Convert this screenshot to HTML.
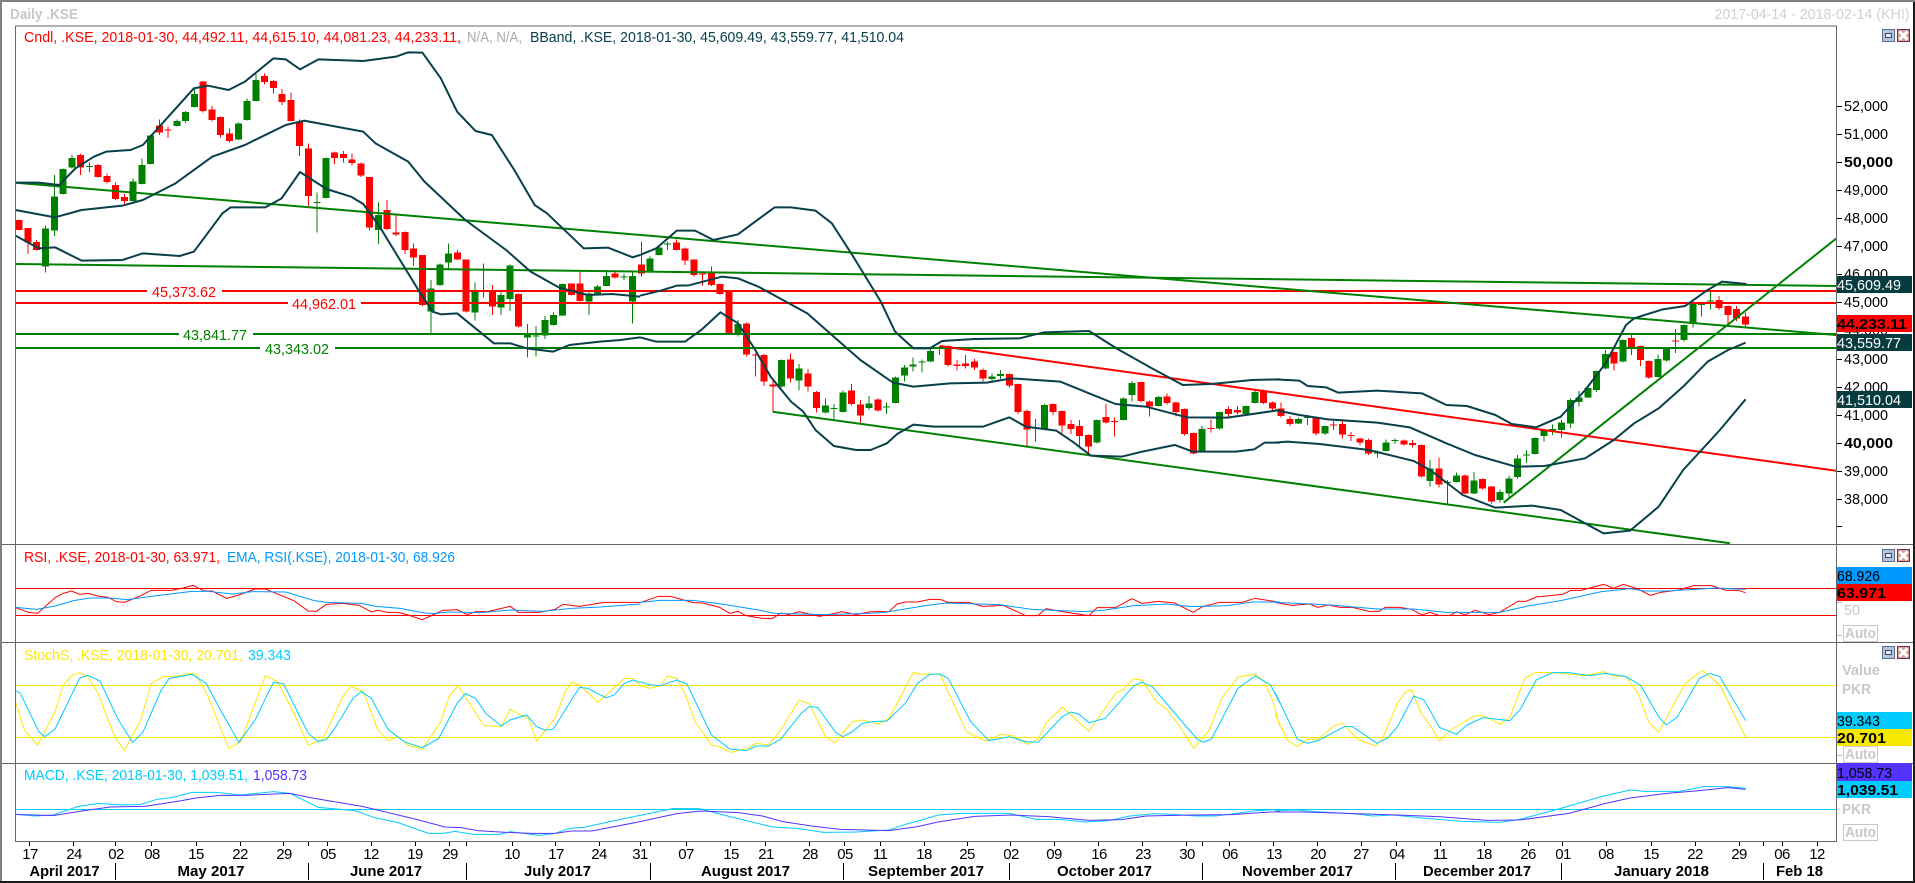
<!DOCTYPE html>
<html><head><meta charset="utf-8"><title>Daily .KSE</title>
<style>
html,body{margin:0;padding:0;background:#fff;width:1915px;height:883px;overflow:hidden}
svg{display:block}
text{font-family:"Liberation Sans",sans-serif;font-size:15px}
.n{vector-effect:non-scaling-stroke;fill:none}
.c{shape-rendering:crispEdges}
.bb{stroke:#07404a;stroke-width:2;stroke-linejoin:round}
.t1{stroke-width:1}
.b{font-weight:bold}
.g{fill:#c8c8c8;font-weight:bold}
.ax{fill:#000}
.d{fill:#000;text-anchor:middle}
.d text{letter-spacing:-.6px}
</style></head><body>
<svg width="1915" height="883" viewBox="0 0 1915 883" xmlns="http://www.w3.org/2000/svg">
<rect width="1915" height="883" fill="#fff"/>

<!-- candles group A -->
<g transform="translate(19.2,0) scale(8.763,0.33333)">
<path class="n c" stroke="#f00" stroke-width="1" d="M0 658V692M1 684V762M2 720V752M7 460V525M9 492V533M10 520V550M11 547V600M12 582V614M16 358V405M17 380V414M21 243V338M22 318V365M23 350V413M24 385V428M28 220V254M29 240V280M30 267V315M31 277V365M32 358V468M33 430V618M36 455V492M37 453V488M38 460V497M39 488V531M40 531V692M42 600V690M43 645V708M44 694V762M45 730V798M46 765V918M50 750V780M51 778V937M54 855V945M57 880V982M63 850V887M64 815V905M68 815V835M71 725V830M75 718V752M76 742V795M77 778V830M78 815V857M79 800V858M80 850V885"/>
<path class="n c" stroke="#f00" stroke-width="7" d="M0 660V690M1 684V728M2 726V750M7 465V502M9 495V531M10 528V546M11 555V597M12 591V603M16 376V398M17 389V392M21 245V333M22 328V360M23 351V405M24 400V423M28 228V246M29 243V264M30 282V306M31 300V363M32 364V438M33 445V588M36 458V474M37 462V474M38 478V489M39 490V526M40 531V682M42 630V687M43 698V703M44 696V750M45 745V773M46 765V915M50 757V778M51 778V935M54 875V920M57 882V980M63 850V885M64 850V903M68 820V832M71 793V820M75 727V750M76 745V782M77 778V825M78 821V824M79 818V855M80 852V882"/>
<path class="n c" stroke="#008000" stroke-width="1" d="M3 676V818M4 525V708M5 505V583M6 465V505M8 488V516M13 535V605M14 475V553M15 404V493M18 358V380M19 333V369M20 262V322M25 368V420M26 295V361M27 222V304M34 577V698M35 473V595M41 608V732M47 840V1000M48 790V858M49 730V812M52 848V962M53 790V893M55 870V945M56 793V933M58 972V1073M59 978V1070M60 948V1017M61 937V977M62 850V948M65 870V945M66 855V885M67 815V860M69 820V840M70 815V970M72 770V817M73 740V766M74 725V750"/>
<path class="n c" stroke="#008000" stroke-width="7" d="M3 685V800M4 589V692M5 507V582M6 474V502M8 498V501M13 544V603M14 495V552M15 406V492M18 363V378M19 336V363M20 282V321M25 370V418M26 303V360M27 240V303M34 606V609M35 474V594M41 645V690M47 865V935M48 793V855M49 760V788M52 875V938M55 885V923M56 797V897M58 1000V1013M59 1007V1010M60 960V1007M61 945V975M62 852V947M65 880V905M66 860V880M67 828V858M69 829V832M70 828V905M72 775V815M73 742V765M74 731V734"/>
</g>
<!-- candles group B -->
<g transform="translate(19.2,280) scale(8.763,0.33333)">
<path class="n c" stroke="#f00" stroke-width="1" d="M81 30V165M83 127V230M84 220V290M85 222V318M86 295V395M88 220V308M90 267V335M91 333V398M95 312V377M96 360V430M98 355V395M106 196V260M107 240V272M108 225V265M109 237V270M110 265V305M113 280V322M114 311V402M115 388V498M116 417V485M118 371V405M119 392V460M120 420V462M121 420V505M122 464V522M124 372V430M125 412V470M128 304V367M129 362V410M131 340V374M132 365V410M133 386V467M134 458V524M136 418V458M138 380V413M139 378V403M142 328V372M143 365V392M144 368V412M145 408V438M148 411V467M150 423V450M151 425V476M152 456V483M153 474V495M154 475V525M158 478V496M159 480V502M160 494V592M162 533V622M165 584V642M167 595V628M168 618V670M182 214V272M184 165V225M185 196V258M186 241V297M189 147V219M194 48V90M195 76V133M196 78V123M197 97V143"/>
<path class="n c" stroke="#f00" stroke-width="7" d="M81 30V160M83 130V223M84 224V227M85 225V305M86 313V320M88 238V296M90 280V320M91 336V384M95 331V372M96 373V406M98 358V392M106 198V255M107 253V258M108 250V258M109 245V263M110 270V296M113 282V317M114 312V396M115 393V449M116 442V445M118 372V396M119 393V437M120 432V447M121 438V468M122 465V500M124 411V427M125 423V426M128 306V363M129 364V380M131 349V369M132 367V396M133 387V462M134 459V520M136 444V447M138 387V402M139 390V398M142 331V369M143 367V385M144 385V408M145 417V432M148 413V461M150 433V436M151 432V464M152 465V468M153 475V487M154 480V520M158 481V493M159 489V495M160 495V590M162 565V613M165 586V640M167 597V625M168 620V664M182 216V251M184 174V202M185 198V240M186 243V292M189 182V185M194 60V84M195 78V105M196 87V115M197 109V133"/>
<path class="n c" stroke="#008000" stroke-width="1" d="M82 120V170M87 238V322M89 252V332M92 355V400M93 372V418M94 331V398M97 348V390M99 367V402M100 289V371M101 255V305M102 232V275M103 238V278M104 205V246M105 198V225M111 280V305M112 270V297M117 372V449M123 418V490M126 352V421M127 303V365M130 348V379M135 438V517M137 394V449M140 376V403M141 333V371M146 412V432M147 405V435M149 436V465M155 512V532M156 478V515M157 475V492M161 540V620M163 600V672M164 578V608M166 576V642M169 628V668M170 587V655M171 525V597M172 510V549M173 472V523M174 445V485M175 433V465M176 420V472M177 355V444M178 333V380M179 320V354M180 271V336M181 210V268M183 178V247M187 224V293M188 201V245M190 133V185M191 65V142M192 70V110M193 30V88"/>
<path class="n c" stroke="#008000" stroke-width="7" d="M82 132V160M87 240V320M89 265V302M92 376V398M93 384V387M94 337V396M97 370V384M99 379V382M100 292V369M101 262V287M102 253V260M103 244V247M104 213V245M105 204V207M111 289V297M112 282V288M117 375V447M123 420V488M126 355V420M127 309V345M130 351V378M135 447V515M137 396V446M140 378V402M141 336V369M146 417V430M147 411V414M149 438V460M155 514V521M156 487V513M157 480V483M161 565V603M163 606V609M164 586V606M166 601V640M169 636V660M170 595V640M171 535V591M172 524V527M173 474V522M174 450V468M175 447V452M176 428V450M177 360V431M178 353V366M179 324V353M180 273V330M181 222V266M183 180V245M187 237V291M188 203V241M190 135V180M191 72V132M192 72V75M193 61V64"/>
</g>

<!-- horizontal level lines -->
<g class="c">
<rect x="16" y="290" width="1820" height="2" fill="#f00"/>
<rect x="16" y="302" width="1820" height="2" fill="#f00"/>
<rect x="16" y="333" width="1820" height="2" fill="#008000"/>
<rect x="16" y="347" width="1820" height="2" fill="#008000"/>
<rect x="147" y="285" width="75" height="12" fill="#fff"/>
<rect x="288" y="297" width="73" height="12" fill="#fff"/>
<rect x="179" y="328" width="74" height="12" fill="#fff"/>
<rect x="260" y="342" width="75" height="12" fill="#fff"/>
</g>
<text x="152" y="297" fill="#f00" textLength="64" lengthAdjust="spacingAndGlyphs">45,373.62</text>
<text x="292" y="309" fill="#f00" textLength="64" lengthAdjust="spacingAndGlyphs">44,962.01</text>
<text x="183" y="340" fill="#008000" textLength="64" lengthAdjust="spacingAndGlyphs">43,841.77</text>
<text x="265" y="354" fill="#008000" textLength="64" lengthAdjust="spacingAndGlyphs">43,343.02</text>

<!-- diagonal trend lines -->
<g fill="none" stroke-width="2">
<path stroke="#008000" d="M16 182.7L1836 335"/>
<path stroke="#008000" d="M16 264L1836 286"/>
<path stroke="#008000" d="M1503.6 502.7L1836 238.7"/>
<path stroke="#008000" d="M772.6 411.7L1730 543.3"/>
<path stroke="#f00" d="M940 346L1836 470.7"/>
</g>

<!-- Bollinger bands -->
<g transform="scale(0.40816,0.33333)">
<path class="n bb" d="M38 548L95 548L145 555L185 505L230 470L260 455L320 450L350 435L475 265L510 257L560 270L600 245L670 175L700 178L735 208L780 178L890 183L970 170L1000 157L1035 158L1080 235L1120 335L1165 393L1205 405L1260 510L1310 615L1340 640L1430 745L1490 743L1550 772L1568 765"/>
<path class="n bb" d="M38 630L135 652L200 630L300 617L350 600L430 550L520 470L600 435L700 375L745 362L890 395L920 430L1000 485L1040 545L1140 660L1240 750L1300 815L1370 863L1440 885L1500 882L1568 890"/>
<path class="n bb" d="M38 707L95 745L135 742L200 782L300 780L350 760L440 768L475 755L545 640L565 622L650 622L690 595L735 516L800 567L860 590L890 612L930 680L990 800L1030 880L1060 935L1080 943L1120 940L1160 980L1210 1030L1250 1030L1290 1045L1355 1055L1395 1035L1470 1025L1520 1020L1568 1012"/>
</g>
<g transform="translate(640,0) scale(0.40816,0.33333)">
<path class="n bb" d="M0 765L40 745L90 692L135 692L180 720L240 703L330 622L370 622L430 632L470 670L520 765L575 875L590 905L625 995L670 1045L710 1045L740 1023L820 1017L930 1015L990 997L1100 993L1170 1047L1250 1102L1330 1155L1400 1152L1500 1140L1568 1138"/>
<path class="n bb" d="M0 887L50 872L90 857L120 856L200 830L240 835L290 860L350 900L410 940L470 1005L540 1080L620 1148L670 1160L760 1150L850 1148L910 1135L1030 1145L1100 1180L1165 1212L1240 1220L1340 1252L1440 1253L1568 1230"/>
<path class="n bb" d="M0 1012L40 1025L110 1025L150 990L197 937L240 970L280 1045L320 1130L370 1205L400 1235L430 1290L475 1338L530 1350L565 1350L605 1330L630 1302L670 1274L720 1280L840 1280L905 1252L945 1280L1020 1292L1060 1325L1105 1367L1180 1370L1230 1355L1310 1335L1355 1355L1460 1355L1505 1348L1530 1328L1568 1328"/>
</g>
<g transform="translate(1275,0) scale(0.40816,0.33333)">
<path class="n bb" d="M0 1138L60 1142L80 1158L125 1162L155 1178L250 1172L360 1180L420 1215L470 1218L540 1245L580 1272L640 1282L700 1250L760 1170L810 1090L860 975L880 955L950 928L1005 918L1060 870L1095 845L1155 852"/>
<path class="n bb" d="M0 1230L60 1245L130 1258L250 1268L330 1282L420 1330L490 1365L590 1400L660 1398L760 1375L830 1320L880 1270L940 1225L1000 1160L1060 1085L1110 1050L1153 1028"/>
<path class="n bb" d="M0 1328L30 1325L110 1332L230 1350L340 1383L380 1410L460 1485L540 1523L630 1517L700 1530L805 1600L870 1592L940 1520L1000 1410L1090 1290L1153 1198"/>
</g>

<!-- indicator reference lines -->
<g class="c">
<rect x="16" y="588" width="1820" height="1" fill="#f00"/>
<rect x="16" y="615" width="1820" height="1" fill="#f00"/>
<rect x="16" y="685" width="1820" height="1" fill="#ffe600"/>
<rect x="16" y="737" width="1820" height="1" fill="#ffe600"/>
<rect x="16" y="809" width="1820" height="1" fill="#00ccff"/>
</g>

<!-- indicator lines -->
<g transform="translate(0,530) scale(0.40816,0.33333)">
<path class="n t1" stroke="#f00" d="M38 233L70 247L92 250L135 203L155 190L175 183L195 193L215 190L240 198L265 202L285 215L305 217L345 197L370 181L420 181L445 175L473 166L500 183L520 183L555 205L585 195L625 177L650 177L690 197L720 212L755 243L775 244L800 223L840 220L880 226L910 246L925 241L950 247L975 247L1000 255L1035 269L1060 255L1085 241L1120 239L1145 254L1165 245L1195 245L1250 229L1270 247L1320 247L1360 238L1380 223L1420 229L1480 217L1568 217"/>
<path class="n t1" stroke="#0099ff" d="M38 232L90 238L135 228L180 212L220 204L270 204L310 209L390 196L470 184L510 184L570 192L620 185L700 186L770 212L800 217L885 220L920 229L980 235L1040 249L1060 251L1100 246L1180 248L1250 240L1330 244L1400 235L1470 231L1568 222"/>
<path class="n t1" stroke="#ffe600" d="M38 517L60 600L92 645L135 545L155 465L175 437L195 428L215 440L240 490L283 625L305 661L345 570L370 462L400 440L440 438L460 430L480 432L510 500L560 655L590 635L650 437L680 455L720 550L755 645L790 630L840 500L860 468L890 485L925 597L950 632L975 620L1000 645L1035 658L1080 575L1100 500L1122 467L1185 586L1228 590L1250 538L1295 567L1315 633L1360 565L1385 485L1400 457L1420 465L1465 517L1530 445L1550 445L1568 465"/>
<path class="n t1" stroke="#00ccff" d="M38 482L50 490L95 605L110 620L135 597L195 445L215 436L245 453L290 570L325 637L350 607L395 480L415 445L470 433L505 460L540 540L585 637L625 570L670 457L695 462L755 610L780 635L800 628L820 595L865 505L885 485L910 505L950 597L990 635L1035 653L1075 625L1120 520L1140 491L1165 505L1190 550L1228 588L1250 570L1290 555L1315 590L1335 600L1355 598L1400 510L1420 472L1440 475L1485 503L1505 495L1530 460L1550 450L1568 457"/>
<path class="n t1" stroke="#00ccff" d="M38 853L85 858L130 855L190 830L240 820L300 825L345 823L385 808L420 803L470 787L530 787L590 795L670 785L710 790L780 832L870 842L915 862L975 878L1050 910L1085 910L1115 904L1160 913L1225 913L1250 905L1320 916L1360 910L1395 895L1430 892L1490 876L1568 856"/>
<path class="n t1" stroke="#5533ff" d="M38 853L130 857L200 843L270 831L355 829L440 813L480 804L540 796L600 796L710 790L760 803L890 830L1020 868L1090 891L1130 893L1170 902L1240 907L1300 910L1360 910L1400 903L1450 903L1568 875"/>
</g>
<g transform="translate(640,530) scale(0.40816,0.33333)">
<path class="n t1" stroke="#f00" d="M0 218L45 199L75 199L130 218L155 219L195 232L220 250L240 244L260 257L300 265L325 265L345 249L365 254L390 245L420 254L440 259L465 253L495 245L530 254L565 245L610 245L630 222L650 216L680 216L710 208L735 208L755 217L805 217L840 229L890 226L920 243L945 257L975 257L995 236L1040 246L1100 257L1120 233L1165 233L1205 206L1230 220L1270 214L1310 219L1355 247L1378 230L1420 217L1475 217L1507 205L1568 217"/>
<path class="n t1" stroke="#0099ff" d="M0 217L50 211L130 211L200 222L290 240L330 250L450 254L560 250L600 247L700 227L750 219L880 224L960 238L1090 245L1140 240L1210 227L1290 222L1350 230L1440 227L1500 216L1568 216"/>
<path class="n t1" stroke="#ffe600" d="M0 467L25 475L50 467L68 438L90 445L110 490L135 575L175 645L195 650L222 667L265 655L285 640L315 645L345 600L390 510L415 522L455 620L478 638L520 575L545 570L585 582L610 565L670 427L690 433L735 432L800 605L835 627L850 633L885 612L915 618L950 643L975 628L995 578L1035 532L1100 603L1165 490L1185 478L1208 447L1230 450L1265 515L1290 537L1320 585L1357 655L1395 600L1425 505L1465 441L1507 433L1530 455L1550 510L1568 590"/>
<path class="n t1" stroke="#00ccff" d="M0 455L25 465L50 467L90 450L115 462L175 615L220 657L260 662L285 648L315 648L345 627L395 550L415 530L435 532L480 608L497 620L520 605L545 580L570 575L605 573L650 520L680 460L710 433L735 432L755 445L810 575L855 632L905 620L945 635L975 637L1035 560L1055 546L1075 552L1100 578L1140 565L1210 467L1230 457L1255 470L1335 585L1365 627L1380 637L1400 627L1465 475L1507 438L1545 465L1568 520"/>
<path class="n t1" stroke="#00ccff" d="M0 856L80 836L145 836L220 860L325 891L385 895L450 907L530 906L610 900L650 883L690 870L730 855L790 850L905 850L970 868L1030 868L1090 876L1150 872L1200 858L1260 851L1310 853L1360 858L1410 858L1450 852L1510 842L1568 838"/>
<path class="n t1" stroke="#5533ff" d="M0 875L90 851L150 843L240 848L300 858L350 875L420 888L490 898L610 902L680 890L730 876L820 859L910 855L1000 860L1100 871L1180 869L1240 858L1350 855L1450 854L1530 847L1568 845"/>
</g>
<g transform="translate(1275,530) scale(0.40816,0.33333)">
<path class="n t1" stroke="#f00" d="M0 217L40 226L85 222L105 232L130 225L160 232L190 232L230 244L255 244L270 232L305 232L335 238L360 255L380 247L400 256L430 256L445 245L465 255L490 241L525 254L550 247L595 214L615 214L640 201L705 193L725 181L750 181L805 163L830 175L853 163L885 175L920 196L945 187L990 180L1025 167L1070 167L1105 181L1135 181L1153 188"/>
<path class="n t1" stroke="#0099ff" d="M0 217L90 222L150 226L250 237L340 237L420 247L550 247L620 228L700 212L800 185L870 176L905 183L960 183L1030 178L1080 174L1153 178"/>
<path class="n t1" stroke="#ffe600" d="M0 550L30 630L55 650L80 628L105 628L145 587L165 580L205 630L245 647L262 630L300 520L320 485L335 480L358 550L380 585L403 633L430 600L490 557L510 557L552 583L575 562L612 445L640 427L680 428L760 437L805 425L830 438L860 440L890 490L915 575L940 607L1005 460L1047 421L1090 465L1153 622"/>
<path class="n t1" stroke="#00ccff" d="M0 487L55 628L80 640L105 632L170 590L190 590L250 640L275 625L300 590L340 498L365 510L403 592L445 613L470 585L510 563L575 572L600 540L640 450L680 428L720 428L770 437L810 430L860 440L895 465L940 560L958 585L985 562L1040 445L1065 430L1090 440L1153 572"/>
<path class="n t1" stroke="#00ccff" d="M0 842L50 840L100 845L200 852L240 858L290 855L370 865L460 874L550 877L600 868L700 835L800 800L870 780L905 784L990 784L1050 770L1110 770L1153 775"/>
<path class="n t1" stroke="#5533ff" d="M0 846L70 846L150 849L300 855L400 860L520 871L600 870L720 850L810 820L870 804L960 790L1040 782L1110 773L1153 778"/>
</g>

<!-- frame -->
<g class="c" fill="none">
<path stroke="#666" stroke-width="1" d="M15.5 26V841.5H1836.5V26H15.5M2 544.5H1836M2 642.5H1913M2 763.5H1913M1836.5 544V544.5H1913"/>
</g>
<rect x="0" y="0" width="1915" height="2" fill="#808080"/>
<rect x="0" y="0" width="2" height="883" fill="#808080"/>
<rect x="0" y="881" width="1915" height="2" fill="#1a1a1a"/>
<rect x="1913" y="2" width="2" height="881" fill="#1a1a1a"/>

<!-- title row -->
<text x="10" y="19" class="g" textLength="68" lengthAdjust="spacingAndGlyphs">Daily .KSE</text>
<text x="1714.5" y="19" fill="#d0d0d0" textLength="195" lengthAdjust="spacingAndGlyphs">2017-04-14 - 2018-02-14 (KHI)</text>

<!-- legends -->
<text x="24" y="42" fill="#f00" textLength="437" lengthAdjust="spacingAndGlyphs">Cndl, .KSE, 2018-01-30, 44,492.11, 44,615.10, 44,081.23, 44,233.11,</text>
<text x="467" y="42" fill="#aaa" textLength="55" lengthAdjust="spacingAndGlyphs">N/A, N/A,</text>
<text x="530" y="42" fill="#07404a" textLength="374" lengthAdjust="spacingAndGlyphs">BBand, .KSE, 2018-01-30, 45,609.49, 43,559.77, 41,510.04</text>
<text x="24" y="562" fill="#f00" textLength="196" lengthAdjust="spacingAndGlyphs">RSI, .KSE, 2018-01-30, 63.971,</text>
<text x="227" y="562" fill="#0099ff" textLength="228" lengthAdjust="spacingAndGlyphs">EMA, RSI(.KSE), 2018-01-30, 68.926</text>
<text x="24" y="660" fill="#ffe600" textLength="219" lengthAdjust="spacingAndGlyphs">StochS, .KSE, 2018-01-30, 20.701,</text>
<text x="248" y="660" fill="#00ccff" textLength="43" lengthAdjust="spacingAndGlyphs">39.343</text>
<text x="24" y="780" fill="#00ccff" textLength="224" lengthAdjust="spacingAndGlyphs">MACD, .KSE, 2018-01-30, 1,039.51,</text>
<text x="253" y="780" fill="#5533ff" textLength="54" lengthAdjust="spacingAndGlyphs">1,058.73</text>

<!-- price axis -->
<path class="c" stroke="#000" stroke-width="1" d="M1837 106.5H1842M1837 134.5H1842M1837 162.5H1842M1837 190.5H1842M1837 218.5H1842M1837 246.5H1842M1837 274.5H1842M1837 302.5H1842M1837 359.5H1842M1837 387.5H1842M1837 415.5H1842M1837 443.5H1842M1837 471.5H1842M1837 499.5H1842M1837 526.5H1842"/>
<path class="c" stroke="#bbb" stroke-width="1" d="M1837 602.5H1842M1837 635.5H1842M1837 755.5H1842"/>
<g class="ax">
<text x="1844" y="111" textLength="44" lengthAdjust="spacingAndGlyphs">52,000</text>
<text x="1844" y="139" textLength="44" lengthAdjust="spacingAndGlyphs">51,000</text>
<text x="1844" y="167" class="b" textLength="49" lengthAdjust="spacingAndGlyphs">50,000</text>
<text x="1844" y="195" textLength="44" lengthAdjust="spacingAndGlyphs">49,000</text>
<text x="1844" y="223" textLength="44" lengthAdjust="spacingAndGlyphs">48,000</text>
<text x="1844" y="251" textLength="44" lengthAdjust="spacingAndGlyphs">47,000</text>
<text x="1844" y="279" textLength="44" lengthAdjust="spacingAndGlyphs">46,000</text>
<text x="1844" y="307" textLength="44" lengthAdjust="spacingAndGlyphs">45,000</text>
<text x="1844" y="335" textLength="44" lengthAdjust="spacingAndGlyphs">44,000</text>
<text x="1844" y="364" textLength="44" lengthAdjust="spacingAndGlyphs">43,000</text>
<text x="1844" y="392" textLength="44" lengthAdjust="spacingAndGlyphs">42,000</text>
<text x="1844" y="420" textLength="44" lengthAdjust="spacingAndGlyphs">41,000</text>
<text x="1844" y="448" class="b" textLength="49" lengthAdjust="spacingAndGlyphs">40,000</text>
<text x="1844" y="476" textLength="44" lengthAdjust="spacingAndGlyphs">39,000</text>
<text x="1844" y="504" textLength="44" lengthAdjust="spacingAndGlyphs">38,000</text>
</g>

<!-- value tags -->
<g class="c">
<rect x="1837" y="276" width="75" height="17" fill="#063c40"/>
<rect x="1837" y="315" width="75" height="17" fill="#f00"/>
<rect x="1837" y="334" width="75" height="17" fill="#063c40"/>
<rect x="1837" y="391" width="75" height="17" fill="#063c40"/>
<rect x="1837" y="567" width="75" height="17" fill="#0099ff"/>
<rect x="1837" y="584" width="75" height="17" fill="#f00"/>
<rect x="1837" y="712" width="75" height="17" fill="#00ccff"/>
<rect x="1837" y="729" width="75" height="17" fill="#f8e800"/>
<rect x="1837" y="763" width="75" height="18" fill="#5533ff"/>
<rect x="1837" y="781" width="75" height="17" fill="#00ccff"/>
</g>
<text x="1837" y="290" fill="#fff" textLength="64" lengthAdjust="spacingAndGlyphs">45,609.49</text>
<text x="1837" y="329" class="b" textLength="70" lengthAdjust="spacingAndGlyphs">44,233.11</text>
<text x="1837" y="348" fill="#fff" textLength="64" lengthAdjust="spacingAndGlyphs">43,559.77</text>
<text x="1837" y="405" fill="#fff" textLength="64" lengthAdjust="spacingAndGlyphs">41,510.04</text>
<text x="1837" y="581" textLength="43" lengthAdjust="spacingAndGlyphs">68.926</text>
<text x="1837" y="598" class="b" textLength="49" lengthAdjust="spacingAndGlyphs">63.971</text>
<text x="1837" y="726" textLength="43" lengthAdjust="spacingAndGlyphs">39.343</text>
<text x="1837" y="743" class="b" textLength="49" lengthAdjust="spacingAndGlyphs">20.701</text>
<text x="1837" y="778" textLength="55" lengthAdjust="spacingAndGlyphs">1,058.73</text>
<text x="1837" y="795" class="b" textLength="61" lengthAdjust="spacingAndGlyphs">1,039.51</text>

<!-- right column gray labels -->
<text x="1844" y="615" fill="#c8c8c8" textLength="16" lengthAdjust="spacingAndGlyphs">50</text>
<g class="c" fill="none" stroke="#c8c8c8"><rect x="1843.5" y="625.5" width="34" height="16"/><rect x="1843.5" y="746.5" width="34" height="16"/><rect x="1843.5" y="824.5" width="34" height="16"/></g>
<text x="1845" y="638" class="g" textLength="31" lengthAdjust="spacingAndGlyphs">Auto</text>
<text x="1845" y="759" class="g" textLength="31" lengthAdjust="spacingAndGlyphs">Auto</text>
<text x="1845" y="837" class="g" textLength="31" lengthAdjust="spacingAndGlyphs">Auto</text>
<text x="1842" y="675" class="g" textLength="38" lengthAdjust="spacingAndGlyphs">Value</text>
<text x="1842" y="694" class="g" textLength="29" lengthAdjust="spacingAndGlyphs">PKR</text>
<text x="1842" y="814" class="g" textLength="29" lengthAdjust="spacingAndGlyphs">PKR</text>

<!-- pane icons -->
<g class="c">
<rect x="1882.5" y="29.5" width="12" height="12" fill="#b4c4dc" stroke="#5a6e90"/><rect x="1885.5" y="33.5" width="6" height="4" fill="#e8eef5" stroke="#3c4a60"/>
<rect x="1897.5" y="29.5" width="12" height="12" fill="#d89a9a" stroke="#703040"/>
<rect x="1882.5" y="549.5" width="12" height="12" fill="#b4c4dc" stroke="#5a6e90"/><rect x="1885.5" y="553.5" width="6" height="4" fill="#e8eef5" stroke="#3c4a60"/>
<rect x="1897.5" y="549.5" width="12" height="12" fill="#d89a9a" stroke="#703040"/>
<rect x="1882.5" y="646.5" width="12" height="12" fill="#b4c4dc" stroke="#5a6e90"/><rect x="1885.5" y="650.5" width="6" height="4" fill="#e8eef5" stroke="#3c4a60"/>
<rect x="1897.5" y="646.5" width="12" height="12" fill="#d89a9a" stroke="#703040"/>
</g>
<path fill="none" stroke="#fff" stroke-width="3" d="M1899.5 31.5L1907.5 39.5M1907.5 31.5L1899.5 39.5M1899.5 551.5L1907.5 559.5M1907.5 551.5L1899.5 559.5M1899.5 648.5L1907.5 656.5M1907.5 648.5L1899.5 656.5"/>

<!-- date axis ticks -->
<path class="c" stroke="#000" stroke-width="1" d="M29.5 842V846M73.5 842V846M115.5 842V846M151.5 842V846M196.5 842V846M240.5 842V846M283.5 842V846M308.5 842V846M327.5 842V846M371.5 842V846M415.5 842V846M449.5 842V846M466.5 842V846M512.5 842V846M555.5 842V846M599.5 842V846M640.5 842V846M650.5 842V846M686.5 842V846M730.5 842V846M765.5 842V846M809.5 842V846M844.5 842V846M880.5 842V846M924.5 842V846M967.5 842V846M1010.5 842V846M1054.5 842V846M1098.5 842V846M1142.5 842V846M1186.5 842V846M1202.5 842V846M1229.5 842V846M1273.5 842V846M1317.5 842V846M1361.5 842V846M1396.5 842V846M1440.5 842V846M1484.5 842V846M1528.5 842V846M1562.5 842V846M1606.5 842V846M1651.5 842V846M1695.5 842V846M1739.5 842V846M1763.5 842V846M1782.5 842V846M1817.5 842V846M115.5 863V880M308.5 863V880M466.5 863V880M650.5 863V880M843.5 863V880M1009.5 863V880M1202.5 863V880M1395.5 863V880M1561.5 863V880M1763.5 863V880"/>

<!-- day labels -->
<g class="d">
<text x="30" y="859">17</text><text x="74" y="859">24</text><text x="116" y="859">02</text><text x="152" y="859">08</text><text x="196" y="859">15</text><text x="240" y="859">22</text><text x="284" y="859">29</text><text x="328" y="859">05</text><text x="371" y="859">12</text><text x="415" y="859">19</text><text x="450" y="859">29</text><text x="512" y="859">10</text><text x="556" y="859">17</text><text x="599" y="859">24</text><text x="640" y="859">31</text><text x="686" y="859">07</text><text x="731" y="859">15</text><text x="766" y="859">21</text><text x="810" y="859">28</text><text x="845" y="859">05</text><text x="880" y="859">11</text><text x="924" y="859">18</text><text x="967" y="859">25</text><text x="1011" y="859">02</text><text x="1054" y="859">09</text><text x="1099" y="859">16</text><text x="1143" y="859">23</text><text x="1187" y="859">30</text><text x="1230" y="859">06</text><text x="1274" y="859">13</text><text x="1318" y="859">20</text><text x="1361" y="859">27</text><text x="1397" y="859">04</text><text x="1440" y="859">11</text><text x="1484" y="859">18</text><text x="1528" y="859">26</text><text x="1563" y="859">01</text><text x="1606" y="859">08</text><text x="1651" y="859">15</text><text x="1695" y="859">22</text><text x="1739" y="859">29</text><text x="1782" y="859">06</text><text x="1817" y="859">12</text>
</g>

<!-- month labels -->
<g fill="#000">
<text x="29.5" y="876" class="b" textLength="70" lengthAdjust="spacingAndGlyphs">April 2017</text>
<text x="177.5" y="876" class="b" textLength="67" lengthAdjust="spacingAndGlyphs">May 2017</text>
<text x="350" y="876" class="b" textLength="72" lengthAdjust="spacingAndGlyphs">June 2017</text>
<text x="524" y="876" class="b" textLength="67" lengthAdjust="spacingAndGlyphs">July 2017</text>
<text x="701" y="876" class="b" textLength="89" lengthAdjust="spacingAndGlyphs">August 2017</text>
<text x="868" y="876" class="b" textLength="116" lengthAdjust="spacingAndGlyphs">September 2017</text>
<text x="1057" y="876" class="b" textLength="95" lengthAdjust="spacingAndGlyphs">October 2017</text>
<text x="1242" y="876" class="b" textLength="111" lengthAdjust="spacingAndGlyphs">November 2017</text>
<text x="1423" y="876" class="b" textLength="108" lengthAdjust="spacingAndGlyphs">December 2017</text>
<text x="1614" y="876" class="b" textLength="95" lengthAdjust="spacingAndGlyphs">January 2018</text>
<text x="1776" y="876" class="b" textLength="47" lengthAdjust="spacingAndGlyphs">Feb 18</text>
</g>
</svg>
</body></html>
